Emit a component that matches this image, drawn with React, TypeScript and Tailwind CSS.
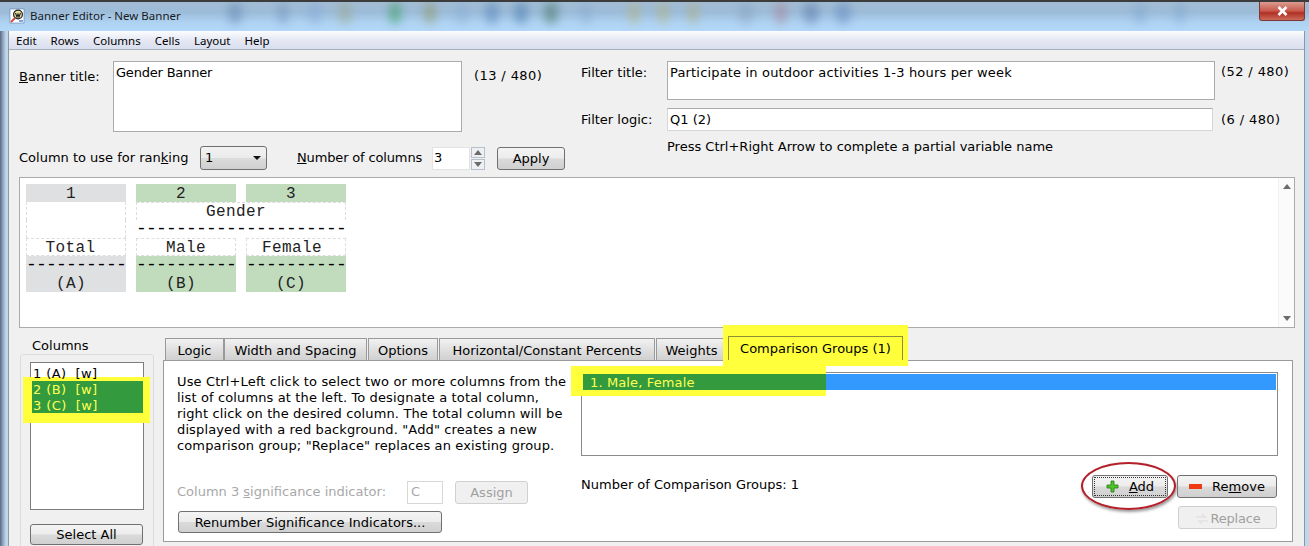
import React from "react";

const Btn = ({ className = "", children, disabled = false }: { className?: string; children: React.ReactNode; disabled?: boolean }) => (
  <div
    className={
      "flex items-center justify-center rounded-[3px] border text-[13px] leading-none " +
      (disabled
        ? "border-[#d0d0d0] bg-[#f0f0f0] text-[#a0a0a0] "
        : "border-[#707070] bg-[linear-gradient(#f4f4f4_0%,#ececec_48%,#dadada_52%,#d0d0d0_100%)] text-black ") +
      className
    }
  >
    {children}
  </div>
);

const Tab = ({ w, children }: { w: string; children: React.ReactNode }) => (
  <div
    className={
      "flex h-[22px] items-center justify-center border border-b-0 border-[#9a9a9a] bg-[linear-gradient(#f2f2f2,#e0e0e0_50%,#d0d0d0)] pt-[2px] text-[13px] " +
      w
    }
  >
    {children}
  </div>
);

const Cell = ({ className = "", children }: { className?: string; children?: React.ReactNode }) => (
  <div className={"flex h-[18px] items-center justify-center whitespace-nowrap leading-[14px] " + className}>{children}</div>
);

const Dashes = ({ n }: { n: number }) => (
  <span className="block pt-px text-[18px] leading-[17px] tracking-[-0.8px] text-black">{"-".repeat(n)}</span>
);

const PreviewCol = ({ tint, num, name, letter, nameClass }: { tint: string; num: string; name: string; letter: string; nameClass: string }) => (
  <div className="w-[100px]">
    <Cell className={tint + " pr-[10px] pt-px"}>{num}</Cell>
    <Cell className="border-x border-dashed border-[#dddddd]" />
    <Cell className="border-x border-dashed border-[#dddddd]" />
    <Cell className={"border border-dashed border-[#dddddd] pt-[2px] " + nameClass}>{name}</Cell>
    <Cell className={tint}>
      <Dashes n={10} />
    </Cell>
    <Cell className={tint + " pr-[10px] pt-[2px]"}>{letter}</Cell>
  </div>
);

const Arrow = ({ up }: { up: boolean }) => (
  <svg width="8" height="5" viewBox="0 0 8 5">
    <path d={up ? "M0 5L4 0L8 5Z" : "M0 0L4 5L8 0Z"} fill="#6b6b6b" />
  </svg>
);

const blobs: [number, string, number][] = [
  [235, "#5f83ad", 14],
  [283, "#6f8fb8", 10],
  [315, "#86a9d6", 14],
  [345, "#9aa78a", 14],
  [395, "#2f9a52", 12],
  [430, "#8f9460", 12],
  [462, "#8aaed4", 14],
  [492, "#4f80b8", 14],
  [521, "#4577aa", 14],
  [551, "#3f6f5c", 14],
  [586, "#8aaace", 12],
  [634, "#b8b070", 10],
  [663, "#b8b070", 10],
  [693, "#b0ac74", 10],
  [746, "#8a9fba", 14],
  [781, "#a87f90", 12],
  [811, "#5a76a8", 16],
  [843, "#5f86bc", 16],
  [1140, "#7ea5cb", 12],
  [1180, "#7ea5cb", 10],
];

export default function App() {
  return (
    <div
      className="flex h-[546px] w-[1309px] flex-col overflow-hidden bg-[linear-gradient(90deg,#5c6a7c_0,#8fa6c4_3px,#c2d6ea_6px,#c2d6ea_100%)] pl-[8px] pr-[4px] text-black"
      style={{ fontFamily: '"DejaVu Sans", sans-serif' }}
    >
      {/* Title bar */}
      <div className="relative -ml-[8px] -mr-[4px] flex h-[31px] shrink-0 items-start overflow-hidden border-t-2 border-[#3c3c3c] bg-[linear-gradient(#a3bcd3,#9cbcd9_35%,#aed2f2_70%,#b4d8f8)] pl-[9px]">
        {blobs.map(([x, c, w]) => (
          <div
            key={x}
            className="absolute top-0 h-[22px] rounded-full opacity-50 blur-[5px]"
            style={{ left: x - w / 2, width: w, backgroundColor: c }}
          />
        ))}
        <svg className="relative mt-[6px]" width="16" height="16" viewBox="0 0 16 16">
          <rect x="1" y="1" width="14" height="14" fill="#ffffff" stroke="#5a7fb0" strokeWidth="0.6" />
          <circle cx="9" cy="6.5" r="4.4" fill="#e8e1a0" stroke="#222" strokeWidth="1.2" />
          <path d="M6.5 5L8 9L9 6L10 9L11.5 5" fill="none" stroke="#222" strokeWidth="1.1" />
          <path d="M2 14L6 10" stroke="#d0503c" strokeWidth="2" />
          <path d="M10 13H14" stroke="#3f7fd0" strokeWidth="1.4" />
        </svg>
        <span className="relative ml-[5px] mt-[6px] text-[11.5px] leading-[15px] text-[#1a1a1a]" style={{ fontFamily: '"Noto Sans", sans-serif' }}>
          Banner Editor - New Banner
        </span>
        <div className="absolute right-[4px] top-0 flex h-[19px] w-[46px] items-center justify-center rounded-b-[3px] border border-t-0 border-[#7a3a34] bg-[linear-gradient(#dc9c90,#c8584c_50%,#b03024_60%,#cc6a5c)]">
          <svg width="11" height="10" viewBox="0 0 11 10">
            <path d="M1.5 1L9.5 9M9.5 1L1.5 9" stroke="#ffffff" strokeWidth="2.6" />
          </svg>
        </div>
      </div>

      {/* Window client */}
      <div className="flex min-h-0 flex-1 flex-col border-x border-[#8a99aa] bg-[#f0f0f0]">
        {/* Menu */}
        <div
          className="flex h-[19px] shrink-0 items-center gap-[14px] border-b border-[#a9b0bd] bg-[linear-gradient(#fbfcfe,#e6e9f4_50%,#d9deee)] pl-[7px] pt-[2px] text-[11.5px]"
          style={{ fontFamily: '"Noto Sans", sans-serif' }}
        >
          <span>Edit</span>
          <span>Rows</span>
          <span>Columns</span>
          <span>Cells</span>
          <span>Layout</span>
          <span>Help</span>
        </div>

        {/* Top section */}
        <div className="flex h-[127px] shrink-0 pl-[10px] text-[13px]">
          <div className="w-[562px] pt-[11px]">
            <div className="flex h-[71px]">
              <span className="mt-[8px] w-[94px] leading-[16px]">
                <u>B</u>anner title:
              </span>
              <div className="h-[71px] w-[349px] border border-[#ababab] bg-white pl-[2px] pt-px leading-[20px] tracking-[-0.2px]">Gender Banner</div>
              <span className="ml-[12px] mt-[7px] leading-[16px] tracking-[0.4px]">(13 / 480)</span>
            </div>
            <div className="mt-[14px] flex h-[24px] items-center">
              <span className="w-[181px]">
                Column to use for ran<u>k</u>ing
              </span>
              <div className="flex h-[24px] w-[67px] items-center justify-between rounded-[3px] border border-[#707070] bg-[linear-gradient(#f2f2f2,#ebebeb_48%,#dcdcdc_52%,#cfcfcf)] px-[4px]">
                <span>1</span>
                <svg width="8" height="4" viewBox="0 0 8 4" className="mr-[1px]">
                  <path d="M0 0H8L4 4Z" fill="#111" />
                </svg>
              </div>
              <span className="ml-[30px] w-[135px] tracking-[-0.15px]">
                <u>N</u>umber of columns
              </span>
              <div className="flex h-[23px] w-[38px] items-center border border-[#e3e3e3] bg-white pl-[1px]">3</div>
              <div className="ml-[1px] flex h-[23px] w-[14px] flex-col gap-px">
                <div className="flex flex-1 items-center justify-center border border-[#b8c0cc] bg-[#eef0f4]">
                  <Arrow up />
                </div>
                <div className="flex flex-1 items-center justify-center border border-[#b8c0cc] bg-[#eef0f4]">
                  <Arrow up={false} />
                </div>
              </div>
              <Btn className="ml-[12px] h-[23px] w-[68px]">Apply</Btn>
            </div>
          </div>
          <div className="flex-1 pt-[11px]">
            <div className="flex h-[39px]">
              <span className="mt-[4px] w-[86px] leading-[16px]">Filter title:</span>
              <div className="h-[39px] w-[548px] border border-[#ababab] bg-white pl-[2px] pt-px leading-[20px] tracking-[0.17px]">Participate in outdoor activities 1-3 hours per week</div>
              <span className="ml-[6px] mt-[3px] leading-[16px] tracking-[0.4px]">(52 / 480)</span>
            </div>
            <div className="mt-[8px] flex h-[23px] items-center">
              <span className="w-[86px]">Filter logic:</span>
              <div className="flex h-[23px] w-[546px] items-center border border-[#d6d6d6] border-t-[#ababab] bg-white pl-[2px]">Q1 (2)</div>
              <span className="ml-[8px] tracking-[0.4px]">(6 / 480)</span>
            </div>
            <div className="ml-[86px] mt-[8px] leading-[16px]">Press Ctrl+Right Arrow to complete a partial variable name</div>
          </div>
        </div>

        {/* Preview */}
        <div className="ml-[10px] flex h-[151px] w-[1276px] shrink-0 justify-between border border-[#ababab] bg-white">
          <div
            className="flex gap-[10px] pl-[6px] pt-[6px] text-[16px] tracking-[0.4px] text-[#222]"
            style={{ fontFamily: '"Liberation Mono", monospace' }}
          >
            <PreviewCol tint="bg-[#dfe0e2]" num="1" name="Total" letter="(A)" nameClass="pr-[11px]" />
            <div className="relative flex gap-[10px]">
              <PreviewCol tint="bg-[#c1dcbd]" num="2" name="Male" letter="(B)" nameClass="" />
              <PreviewCol tint="bg-[#c1dcbd]" num="3" name="Female" letter="(C)" nameClass="pr-[8px]" />
              <div className="absolute left-0 top-[18px] flex h-[36px] w-[210px] flex-col items-center whitespace-nowrap bg-white">
                <Cell className="w-full border-x border-t border-dashed border-[#dddddd] pr-[10px]">Gender</Cell>
                <Dashes n={21} />
              </div>
            </div>
          </div>
          <div className="flex w-[16px] flex-col items-center justify-between border-l border-[#f0f0f0] bg-[#fbfbfb] py-[6px]">
            <Arrow up />
            <Arrow up={false} />
          </div>
        </div>

        {/* Bottom */}
        <div className="flex min-h-0 flex-1 pl-[11px] pt-[9px] text-[13px]">
          {/* Columns group */}
          <div className="relative mt-[8px] w-[134px] shrink-0 pt-[9px]">
            <div className="h-[220px] rounded-[3px] border border-[#dcdcdc] px-[9px] pt-[7px]">
              <div className="relative h-[148px] w-[114px] border border-[#7d7d7d] bg-white pl-[2px] pt-[2px] leading-[18px] tracking-[0.4px]">
                <div className="relative z-10 h-[16px]">1 (A) &nbsp;[w]</div>
                <div className="absolute left-[-8px] top-[14px] z-0 h-[46px] w-[127px] bg-[#ffff3c]" />
                <div className="relative z-10 -ml-[1px] w-[111px] bg-[#339a3d] pl-[1px] text-[#ffff55]">
                  <div className="h-[16px]">2 (B) &nbsp;[w]</div>
                  <div className="h-[16px]">3 (C) &nbsp;[w]</div>
                </div>
              </div>
              <Btn className="mt-[14px] h-[21px] w-[113px]">Select All</Btn>
            </div>
            <span className="absolute left-[10px] top-[-7px] bg-[#f0f0f0] px-[2px] leading-[16px]">Columns</span>
          </div>

          {/* Tabs */}
          <div className="-mt-px ml-[9px] flex w-[1130px] flex-col">
            <div className="relative z-10 flex h-[24px] shrink-0 items-end pl-[2px] pt-[2px]">
              <Tab w="w-[59px]">Logic</Tab>
              <Tab w="w-[143px]">Width and Spacing</Tab>
              <Tab w="ml-px w-[70px]">Options</Tab>
              <Tab w="ml-px w-[216px]">Horizontal/Constant Percents</Tab>
              <Tab w="ml-px w-[71px]">Weights</Tab>
              <div className="relative ml-px h-[24px] w-[175px]">
                <div className="absolute -left-[5px] -top-[11px] h-[41px] w-[185px] bg-[#ffff3c]" />
                <div className="absolute inset-0 flex items-start justify-center border border-b-0 border-[#8f8f3a] bg-[#ffff3c] pt-[2px]">Comparison Groups (1)</div>
              </div>
            </div>
            <div className="flex h-[182px] shrink-0 border border-[#9a9a9a] bg-white pl-[13px]">
              <div className="w-[404px] shrink-0 pt-[13px]">
                <div className="h-[96px] w-[400px] leading-[16px] tracking-[0.13px]">
                  <p>Use Ctrl+Left click to select two or more columns from the</p>
                  <p>list of columns at the left. To designate a total column,</p>
                  <p>right click on the desired column. The total column will be</p>
                  <p>displayed with a red background. "Add" creates a new</p>
                  <p>comparison group; "Replace" replaces an existing group.</p>
                </div>
                <div className="mt-[10px] flex h-[24px] items-center text-[#a8a8a8]">
                  <span className="w-[230px]">
                    Column 3 <u>s</u>ignificance indicator:
                  </span>
                  <div className="flex h-[23px] w-[36px] items-center border border-[#d8d8d8] pl-[3px]">C</div>
                  <Btn disabled className="ml-[12px] h-[23px] w-[73px]">Assign</Btn>
                </div>
                <Btn className="ml-px mt-[7px] h-[22px] w-[264px]">Renumber Significance Indicators...</Btn>
              </div>
              <div className="w-[697px] shrink-0 pt-[11px]">
                <div className="relative h-[84px] w-[697px] border border-[#8a8a8a] bg-white">
                  <div className="absolute -left-[11px] -top-[7px] h-[30px] w-[255px] bg-[#ffff3c]" />
                  <div className="relative mx-px mt-px flex h-[16px]">
                    <div className="w-[243px] bg-[#339a3d] pl-[7px] leading-[18px] tracking-[0.13px] text-[#ffff55]">1. Male, Female</div>
                    <div className="flex-1 bg-[#3399ff]" />
                  </div>
                </div>
                <div className="flex">
                  <span className="mt-[21px] leading-[16px]">Number of Comparison Groups: 1</span>
                  <div className="ml-auto mr-[1px] flex w-[186px] flex-wrap justify-end pt-[19px]">
                    <div className="relative mr-[9px]">
                      <Btn className="h-[23px] w-[76px] gap-[10px] border-[#3c9bd0] outline-1 -outline-offset-3 outline-dotted outline-[#333]">
                        <svg width="13" height="13" viewBox="0 0 13 13">
                          <path d="M5 1H8V5H12V8H8V12H5V8H1V5H5Z" fill="#4fc42c" stroke="#267a12" strokeWidth="0.8" />
                        </svg>
                        <span>
                          <u>A</u>dd
                        </span>
                      </Btn>
                      <div className="absolute -left-[11px] -top-[13px] h-[48px] w-[95px] rounded-[50%] border-2 border-[#b3202a] shadow-[1px_2px_3px_#999]" />
                    </div>
                    <Btn className="h-[23px] w-[100px] gap-[10px]">
                      <svg width="13" height="5" viewBox="0 0 13 5">
                        <rect width="13" height="5" fill="#ee3a12" />
                      </svg>
                      <span>
                        Re<u>m</u>ove
                      </span>
                    </Btn>
                    <Btn disabled className="mt-[8px] h-[23px] w-[99px] justify-between pl-[11px] pr-[11px] pt-[2px] tracking-[-0.2px] text-[#909090]">
                      <svg width="16" height="12" viewBox="0 0 16 12">
                        <path d="M2 4H11L8 1M14 8H5L8 11" fill="none" stroke="#e2e2e2" strokeWidth="1.5" />
                      </svg>
                      <span>Replace</span>
                    </Btn>
                  </div>
                </div>
              </div>
            </div>
          </div>
        </div>
      </div>
    </div>
  );
}
